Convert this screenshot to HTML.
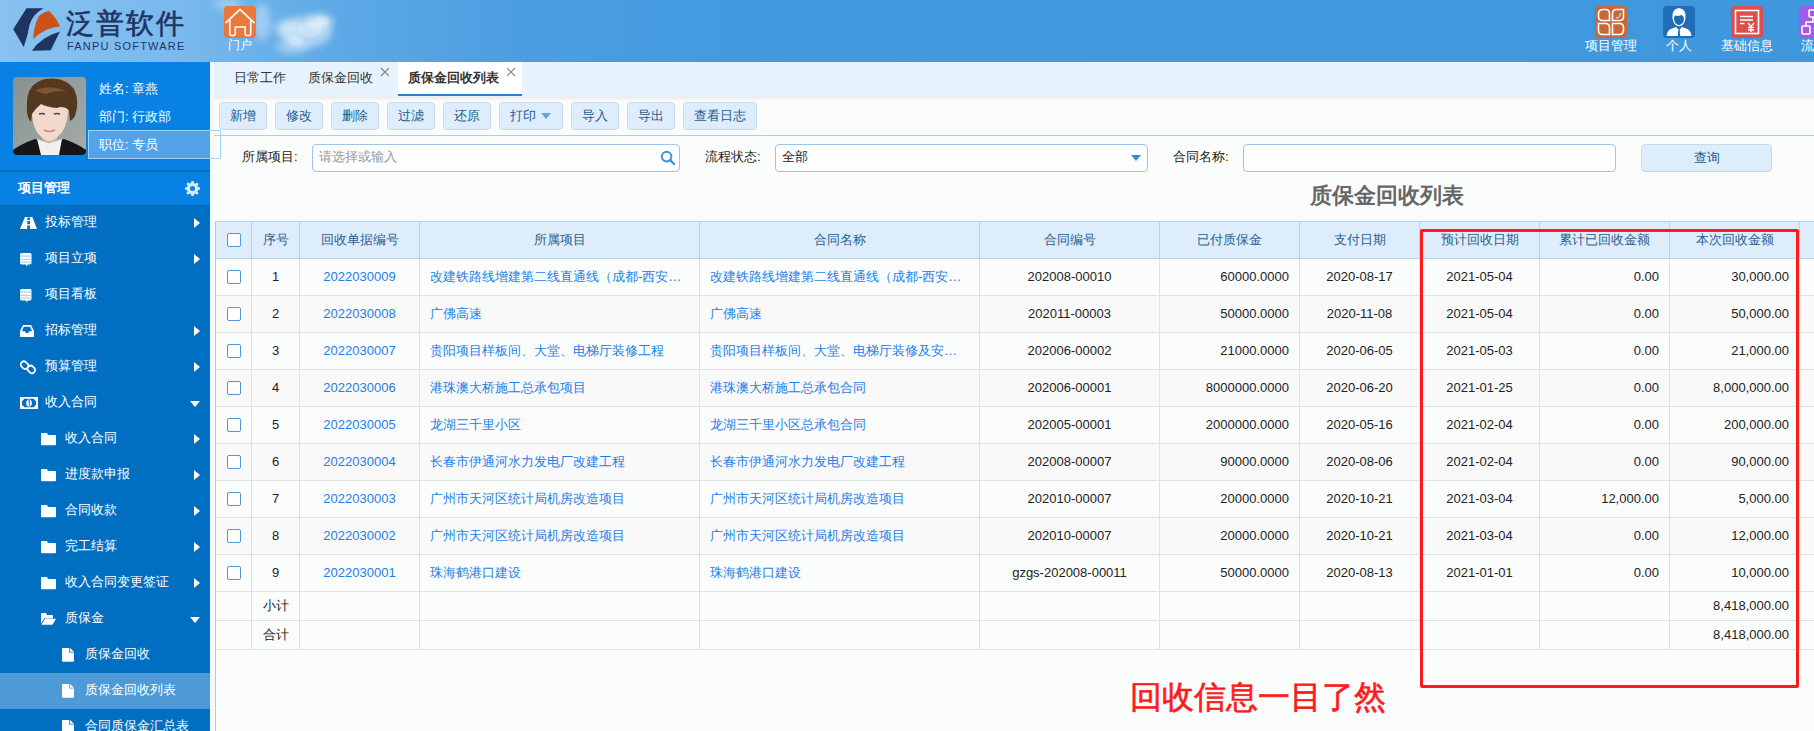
<!DOCTYPE html>
<html><head><meta charset="utf-8">
<style>
*{margin:0;padding:0;box-sizing:border-box}
html,body{width:1814px;height:731px;overflow:hidden;background:#fbfdfd;font-family:"Liberation Sans",sans-serif;font-size:13px;color:#333}
.abs{position:absolute}
#hdr{left:0;top:0;width:1814px;height:62px;background:linear-gradient(to right,#88c2f0 0,#7ab9ed 180px,#5ea9e6 330px,#4b9ee1 520px,#4199df 800px,#3f97de 1814px)}
#side{left:0;top:62px;width:210px;height:669px;background:#006fc2}
#user{left:0;top:62px;width:210px;height:108px;background:#0781e3}
#uline{left:0;top:170px;width:210px;height:2px;background:#0670c0}
#mh{left:0;top:172px;width:210px;height:33px;background:#0781e3;color:#fff;font-weight:bold}
.mi{position:absolute;left:0;width:210px;height:36px;line-height:36px;color:#fff}
.mi .t{position:absolute;top:0}
.mi .ar{position:absolute;left:193px;top:13px;width:0;height:0;border-top:5px solid transparent;border-bottom:5px solid transparent;border-left:6px solid #fff}
.mi .dn{position:absolute;left:191px;top:15px;width:0;height:0;border-left:5px solid transparent;border-right:5px solid transparent;border-top:6px solid #fff}
#tabs{left:214px;top:62px;width:1600px;height:34px;background:#e6f2fc}
#strip{left:210px;top:62px;width:4px;height:669px;background:#f3f8fd}
.tab{position:absolute;top:62px;height:34px;line-height:32px;color:#333}
.x{position:absolute;color:#777;font-size:15px;line-height:15px}
.btn{position:absolute;top:102px;height:28px;line-height:25px;background:#deedfb;border:1px solid #c3dbef;border-radius:4px;text-align:center;color:#1f5c90}
.lbl{position:absolute;top:148px;line-height:18px;color:#222}
.inp{position:absolute;top:144px;height:28px;border:1px solid #9fc5e6;border-radius:4px;background:#fdfeff}
table{position:absolute;left:215px;top:221px;border-collapse:collapse;table-layout:fixed}
td,th{color:#222;border:1px solid #e1e1e1;height:37px;padding:0;font-weight:normal;white-space:nowrap;overflow:hidden;text-overflow:ellipsis}
th{background:#deedfb;border-color:#b7d4ee;color:#2a6090;height:37px;padding-bottom:1px}
.cb{display:inline-block;width:14px;height:14px;border:1px solid #5096d8;border-radius:2px;background:#fff;vertical-align:middle}
.lk{color:#1f7fe6}
.c{text-align:center}.r{text-align:right;padding-right:10px}.l{text-align:left;padding-left:10px;padding-right:14px}
.sum td{height:29px}
tr.odd td{background:#fbfdfd}tr.even td{background:#f9f9fa}
td{padding-bottom:1px}
</style></head><body>
<!-- header -->
<div id="hdr" class="abs"></div>
<svg class="abs" style="left:200px;top:0" width="160" height="62" viewBox="200 0 160 62">
 <defs><filter id="cb" x="-50%" y="-50%" width="200%" height="200%"><feGaussianBlur stdDeviation="3.5"/></filter><filter id="cb2" x="-50%" y="-50%" width="200%" height="200%"><feGaussianBlur stdDeviation="1.8"/></filter></defs>
 <g filter="url(#cb)" fill="#fff">
  <ellipse cx="306" cy="32" rx="26" ry="16" opacity=".45"/>
  <ellipse cx="320" cy="22" rx="14" ry="9" opacity=".45"/>
  <ellipse cx="288" cy="28" rx="14" ry="9" opacity=".4"/>
  <ellipse cx="292" cy="47" rx="16" ry="7" opacity=".35"/>
  <ellipse cx="262" cy="22" rx="9" ry="18" opacity=".35"/>
  <ellipse cx="228" cy="4" rx="14" ry="6" opacity=".3"/>
 </g>
 <g filter="url(#cb2)" fill="#fff">
  <ellipse cx="310" cy="30" rx="12" ry="8" opacity=".3"/>
  <ellipse cx="322" cy="21" rx="7" ry="5" opacity=".3"/>
  <ellipse cx="296" cy="40" rx="8" ry="5" opacity=".25"/>
 </g>
</svg>
<svg class="abs" style="left:0;top:0" width="70" height="62" viewBox="0 0 70 62">
 <path d="M13.2 29.2 L26.5 8.3 L43.5 8.3 Q32 15 29.5 25 Q27.5 37 23.7 46.9 Z" fill="#1f3463"/>
 <path d="M33.1 39.1 Q33.5 27 38.6 16.5 Q43 12 49 11 Q56 17 60 26.5 Q46 27 33.1 39.1 Z" fill="#cd5218"/>
 <path d="M32 50.7 Q40 37.5 60 31.4 L50.7 50.2 Z" fill="#1f3463"/>
</svg>
<div class="abs" style="left:66px;top:7px;font-size:28px;line-height:33px;color:#1f3463;letter-spacing:2px;-webkit-text-stroke:0.6px #1f3463;white-space:nowrap">泛普软件</div>
<div class="abs" style="left:67px;top:39px;font-size:11px;line-height:14px;color:#1f3463;letter-spacing:1.2px;white-space:nowrap">FANPU SOFTWARE</div>
<div class="abs" style="left:224px;top:6px;width:32px;height:32px;border-radius:4px;background:#e8793b"></div>
<svg class="abs" style="left:224px;top:6px" width="32" height="32" viewBox="0 0 32 32">
 <path d="M2 16.6 L16 3.4 L30 16.6" fill="none" stroke="#fff" stroke-width="1.6" stroke-linecap="round" stroke-linejoin="round"/>
 <path d="M5.8 14 V28 Q5.8 29.5 7.3 29.5 H9.8 Q11.3 29.5 11.3 28 V21 H21.2 V28 Q21.2 29.5 22.7 29.5 H25.2 Q26.7 29.5 26.7 28 V14" fill="none" stroke="#fff" stroke-width="1.6" stroke-linejoin="round"/>
</svg>
<div class="abs" style="left:228px;top:38px;font-size:12px;line-height:14px;color:#fff;white-space:nowrap">门户</div>

<!-- top right icons -->
<div class="abs" style="left:1595px;top:6px;width:32px;height:32px;border-radius:4px;background:#c8673a"></div>
<svg class="abs" style="left:1595px;top:6px" width="32" height="32" viewBox="0 0 32 32" fill="none" stroke="#fff" stroke-width="1.6">
 <path d="M3.5 8 Q3.5 3.5 8 3.5 H10.5 Q14.5 3.5 14.5 7.5 V14.5 H7.5 Q3.5 14.5 3.5 10.5 Z"/>
 <path d="M17.5 7.5 Q17.5 3.5 21.5 3.5 H28.5 V10.5 Q28.5 14.5 24.5 14.5 H17.5 Z"/>
 <path d="M3.5 17.5 H10.5 Q14.5 17.5 14.5 21.5 V28.5 H7.5 Q3.5 28.5 3.5 24.5 Z"/>
 <path d="M17.5 17.5 H24.5 Q28.5 17.5 28.5 21.5 V24 Q28.5 28.5 24 28.5 H17.5 Z"/>
 <path d="M21 12 Q25 12 25.5 7" stroke-width="0.9"/>
</svg>
<div class="abs" style="left:1585px;top:38px;width:52px;text-align:center;font-size:13px;line-height:15px;color:#fff;white-space:nowrap">项目管理</div>
<div class="abs" style="left:1663px;top:6px;width:32px;height:32px;border-radius:4px;background:#1f6db5"></div>
<svg class="abs" style="left:1663px;top:6px" width="32" height="32" viewBox="0 0 32 32">
 <path d="M9.5 12 Q8.5 3 16 2 Q23.5 3 22.5 12 Q22 19 16 20.5 Q10 19 9.5 12 Z" fill="#fff"/>
 <path d="M11 12.5 Q11 18 16 19.2 Q21 18 21 12.5 Q20.5 9.5 18.5 9 Q15 10.5 12 9.5 Q11 10.5 11 12.5 Z" fill="#1f6db5"/>
 <path d="M3.5 30 Q4 24 9 22.5 L13 21 L16 24 L19 21 L23 22.5 Q28 24 28.5 30 Z" fill="#fff"/>
 <path d="M15.3 23.5 L16.7 23.5 L17.2 30 L14.8 30 Z" fill="#1f6db5"/>
</svg>
<div class="abs" style="left:1653px;top:38px;width:52px;text-align:center;font-size:13px;line-height:15px;color:#fff;white-space:nowrap">个人</div>
<div class="abs" style="left:1731px;top:6px;width:32px;height:32px;border-radius:4px;background:#d9504e"></div>
<svg class="abs" style="left:1731px;top:6px" width="32" height="32" viewBox="0 0 32 32" fill="none" stroke="#fff">
 <rect x="4.5" y="4.5" width="23" height="23" stroke-width="1.6"/>
 <path d="M9 10.5 H22 M9 14 H22 M9 17.5 H13.5" stroke-width="1.4"/>
 <path d="M17 17 L20 20.5 L23 17 M20 20.5 V26 M17 21.5 H23 M17 24 H23" stroke-width="1.3"/>
</svg>
<div class="abs" style="left:1721px;top:38px;width:52px;text-align:center;font-size:13px;line-height:15px;color:#fff;white-space:nowrap">基础信息</div>
<div class="abs" style="left:1799px;top:6px;width:32px;height:32px;border-radius:4px;background:#a25be8"></div>
<svg class="abs" style="left:1799px;top:6px" width="32" height="32" viewBox="0 0 32 32" fill="none" stroke="#fff" stroke-width="1.6">
 <rect x="10" y="4" width="8" height="7" rx="1"/><rect x="3" y="20" width="8" height="8" rx="1"/>
 <path d="M7 20 V16 H14 V11"/>
</svg>
<div class="abs" style="left:1801px;top:38px;font-size:13px;line-height:15px;color:#fff;white-space:nowrap">流程</div>

<!-- sidebar -->
<div id="side" class="abs"></div>
<div id="user" class="abs"></div>
<svg class="abs" style="left:13px;top:77px" width="73" height="78" viewBox="0 0 73 78">
 <defs><linearGradient id="pbg" x1="0" y1="0" x2="1" y2="1"><stop offset="0" stop-color="#86918d"/><stop offset="1" stop-color="#a4adaa"/></linearGradient>
 <clipPath id="pc"><rect width="73" height="78" rx="4"/></clipPath></defs>
 <g clip-path="url(#pc)">
 <rect width="73" height="78" fill="url(#pbg)"/>
 <path d="M0 73 Q8 67 22 62 L36 66 L51 62 Q65 67 73 73 V78 H0 Z" fill="#161618"/>
 <path d="M24 62 L36 66 L49 62 L46 78 H28 Z" fill="#f2efed"/>
 <path d="M28 50 L29 62 Q36 69 44 62 L45 50 Z" fill="#e6c0aa"/>
 <path d="M19 34 Q19 59 36 64 Q54 59 55 34 Q52 24 37 24 Q23 24 19 34 Z" fill="#f3d9cb"/>
 <path d="M14 28 Q13 7 32 2 Q52 -1 61 12 Q67 24 62 39 Q60 43 57 44 L56 33 Q50 28 44 31 Q34 30 28 27 Q23 31 19 37 L18 45 Q13 40 14 28 Z" fill="#543820"/>
 <path d="M22 14 Q36 6 55 15 Q46 12 33 17 Z" fill="#7a5632"/>
 <path d="M26 37 Q29 36 32 37 M41 37 Q44 36 47 37" stroke="#3e454c" stroke-width="1.5" fill="none"/>
 <path d="M31 53 Q36 56 42 53" stroke="#c88888" stroke-width="1.6" fill="none"/>
 </g>
</svg>
<div class="abs" style="left:99px;top:80px;line-height:17px;color:#fff">姓名: 章燕</div>
<div class="abs" style="left:99px;top:108px;line-height:17px;color:#fff">部门: 行政部</div>
<div class="abs" style="left:88px;top:130px;width:122px;height:29px;background:#52a3ea"></div>
<div class="abs" style="left:99px;top:136px;line-height:17px;color:#fff">职位: 专员</div>
<div id="uline" class="abs"></div>
<div id="mh" class="abs"><span class="abs" style="left:18px;top:7px;line-height:17px">项目管理</span></div>
<svg class="abs" style="left:185px;top:181px" width="15" height="15" viewBox="0 0 16 16"><path fill="#d8e9f8" d="M6.8 0h2.4l.4 2.2 1.5.6 1.8-1.3 1.7 1.7-1.3 1.8.6 1.5 2.2.4v2.4l-2.2.4-.6 1.5 1.3 1.8-1.7 1.7-1.8-1.3-1.5.6-.4 2.2H6.8l-.4-2.2-1.5-.6-1.8 1.3-1.7-1.7 1.3-1.8-.6-1.5L0 9.2V6.8l2.2-.4.6-1.5-1.3-1.8 1.7-1.7 1.8 1.3 1.5-.6zM8 5.3A2.7 2.7 0 1 0 8 10.7 2.7 2.7 0 1 0 8 5.3z"/></svg>
<svg class="abs" style="left:20px;top:217px" width="17" height="12" viewBox="0 0 17 12"><path d="M5 0 H12.4 L17 12 H0 Z" fill="#fff"/><path d="M7.4 0.6 H10 V3 H7.4 Z M7.3 3.9 H10 V7.3 H7.3 Z M7.2 8.6 H10 V12 H7.2 Z" fill="#006fc2"/></svg>
<div class="abs" style="left:45px;top:213px;line-height:18px;color:#fff;white-space:nowrap">投标管理</div>
<div class="abs" style="left:194px;top:218px;width:0;height:0;border-top:5px solid transparent;border-bottom:5px solid transparent;border-left:6px solid #fff"></div>
<svg class="abs" style="left:20px;top:253px" width="12" height="14" viewBox="0 0 12 14"><path d="M1.5 0 H10 Q11.5 0 11.5 1.5 V10 Q11.5 11.4 10 11.4 H7.8 L6.4 13.6 L6 11.4 H1.5 Q0 11.4 0 10 V1.5 Q0 0 1.5 0 Z" fill="#fff"/><path d="M0 3.1 H11.5 M0 6.3 H11.5 M0 9.1 H11.5" stroke="#8ab9e4" stroke-width="0.8"/></svg>
<div class="abs" style="left:45px;top:249px;line-height:18px;color:#fff;white-space:nowrap">项目立项</div>
<div class="abs" style="left:194px;top:254px;width:0;height:0;border-top:5px solid transparent;border-bottom:5px solid transparent;border-left:6px solid #fff"></div>
<svg class="abs" style="left:20px;top:289px" width="12" height="14" viewBox="0 0 12 14"><path d="M1.5 0 H10 Q11.5 0 11.5 1.5 V10 Q11.5 11.4 10 11.4 H7.8 L6.4 13.6 L6 11.4 H1.5 Q0 11.4 0 10 V1.5 Q0 0 1.5 0 Z" fill="#fff"/><path d="M0 3.1 H11.5 M0 6.3 H11.5 M0 9.1 H11.5" stroke="#8ab9e4" stroke-width="0.8"/></svg>
<div class="abs" style="left:45px;top:285px;line-height:18px;color:#fff;white-space:nowrap">项目看板</div>
<svg class="abs" style="left:20px;top:325px" width="14" height="12" viewBox="0 0 14 12"><path d="M3 0 H11 L14 6 V12 H0 V6 Z" fill="#fff"/><path d="M3.8 1.8 H10.2 L12 6.2 H9.2 Q8.5 8.2 7 8.2 Q5.5 8.2 4.8 6.2 H2 Z" fill="#006fc2"/></svg>
<div class="abs" style="left:45px;top:321px;line-height:18px;color:#fff;white-space:nowrap">招标管理</div>
<div class="abs" style="left:194px;top:326px;width:0;height:0;border-top:5px solid transparent;border-bottom:5px solid transparent;border-left:6px solid #fff"></div>
<svg class="abs" style="left:20px;top:359px" width="16" height="16" viewBox="0 0 16 16" fill="none" stroke="#fff" stroke-width="1.8"><rect x="1.4" y="2.2" width="6.2" height="8" rx="3" transform="rotate(-45 4.5 6.2)"/><rect x="8.2" y="6.4" width="6.2" height="8" rx="3" transform="rotate(-45 11.3 10.4)"/></svg>
<div class="abs" style="left:45px;top:357px;line-height:18px;color:#fff;white-space:nowrap">预算管理</div>
<div class="abs" style="left:194px;top:362px;width:0;height:0;border-top:5px solid transparent;border-bottom:5px solid transparent;border-left:6px solid #fff"></div>
<svg class="abs" style="left:20px;top:397px" width="18" height="12" viewBox="0 0 18 12"><rect x="0" y="0" width="18" height="12" fill="#fff"/><path d="M4 1.8 H14 Q14.5 3.5 16 4 V8 Q14.5 8.5 14 10.2 H4 Q3.5 8.5 2 8 V4 Q3.5 3.5 4 1.8 Z" fill="#006fc2"/><ellipse cx="9" cy="6" rx="2.8" ry="3.6" fill="#fff"/><path d="M8.3 4 L9.3 3.4 V8.6" stroke="#006fc2" stroke-width="1" fill="none"/></svg>
<div class="abs" style="left:45px;top:393px;line-height:18px;color:#fff;white-space:nowrap">收入合同</div>
<div class="abs" style="left:190px;top:401px;width:0;height:0;border-left:5px solid transparent;border-right:5px solid transparent;border-top:6px solid #fff"></div>
<svg class="abs" style="left:41px;top:433px" width="15" height="13" viewBox="0 0 15 13"><path d="M1 0 H6 L7 2 H14 Q15 2 15 3 V11.5 Q15 12.3 14 12.3 H1 Q0 12.3 0 11.5 V1 Q0 0 1 0 Z" fill="#fff"/></svg>
<div class="abs" style="left:65px;top:429px;line-height:18px;color:#fff;white-space:nowrap">收入合同</div>
<div class="abs" style="left:194px;top:434px;width:0;height:0;border-top:5px solid transparent;border-bottom:5px solid transparent;border-left:6px solid #fff"></div>
<svg class="abs" style="left:41px;top:469px" width="15" height="13" viewBox="0 0 15 13"><path d="M1 0 H6 L7 2 H14 Q15 2 15 3 V11.5 Q15 12.3 14 12.3 H1 Q0 12.3 0 11.5 V1 Q0 0 1 0 Z" fill="#fff"/></svg>
<div class="abs" style="left:65px;top:465px;line-height:18px;color:#fff;white-space:nowrap">进度款申报</div>
<div class="abs" style="left:194px;top:470px;width:0;height:0;border-top:5px solid transparent;border-bottom:5px solid transparent;border-left:6px solid #fff"></div>
<svg class="abs" style="left:41px;top:505px" width="15" height="13" viewBox="0 0 15 13"><path d="M1 0 H6 L7 2 H14 Q15 2 15 3 V11.5 Q15 12.3 14 12.3 H1 Q0 12.3 0 11.5 V1 Q0 0 1 0 Z" fill="#fff"/></svg>
<div class="abs" style="left:65px;top:501px;line-height:18px;color:#fff;white-space:nowrap">合同收款</div>
<div class="abs" style="left:194px;top:506px;width:0;height:0;border-top:5px solid transparent;border-bottom:5px solid transparent;border-left:6px solid #fff"></div>
<svg class="abs" style="left:41px;top:541px" width="15" height="13" viewBox="0 0 15 13"><path d="M1 0 H6 L7 2 H14 Q15 2 15 3 V11.5 Q15 12.3 14 12.3 H1 Q0 12.3 0 11.5 V1 Q0 0 1 0 Z" fill="#fff"/></svg>
<div class="abs" style="left:65px;top:537px;line-height:18px;color:#fff;white-space:nowrap">完工结算</div>
<div class="abs" style="left:194px;top:542px;width:0;height:0;border-top:5px solid transparent;border-bottom:5px solid transparent;border-left:6px solid #fff"></div>
<svg class="abs" style="left:41px;top:577px" width="15" height="13" viewBox="0 0 15 13"><path d="M1 0 H6 L7 2 H14 Q15 2 15 3 V11.5 Q15 12.3 14 12.3 H1 Q0 12.3 0 11.5 V1 Q0 0 1 0 Z" fill="#fff"/></svg>
<div class="abs" style="left:65px;top:573px;line-height:18px;color:#fff;white-space:nowrap">收入合同变更签证</div>
<div class="abs" style="left:194px;top:578px;width:0;height:0;border-top:5px solid transparent;border-bottom:5px solid transparent;border-left:6px solid #fff"></div>
<svg class="abs" style="left:41px;top:613px" width="15" height="12" viewBox="0 0 15 12"><path d="M1 0 H5 L6 2 H11 Q12 2 12 3 V5 H3.5 L0 10.5 V1 Q0 0 1 0 Z" fill="#fff"/><path d="M4 5.8 H15 L11.5 11.7 H0.3 Z" fill="#fff"/><path d="M3.6 5.4 H12" stroke="#c9dcee" stroke-width="0.8"/></svg>
<div class="abs" style="left:65px;top:609px;line-height:18px;color:#fff;white-space:nowrap">质保金</div>
<div class="abs" style="left:190px;top:617px;width:0;height:0;border-left:5px solid transparent;border-right:5px solid transparent;border-top:6px solid #fff"></div>
<svg class="abs" style="left:62px;top:648px" width="12" height="14" viewBox="0 0 12 14"><path d="M1 0 H7.2 V4.4 H12 V13 Q12 13.7 11 13.7 H1 Q0 13.7 0 13 V1 Q0 0 1 0 Z M8 0 L12 3.8 H8 Z" fill="#fff"/></svg>
<div class="abs" style="left:85px;top:645px;line-height:18px;color:#fff;white-space:nowrap">质保金回收</div>
<div class="abs" style="left:0;top:673px;width:210px;height:36px;background:#4e9ad6"></div>
<svg class="abs" style="left:62px;top:684px" width="12" height="14" viewBox="0 0 12 14"><path d="M1 0 H7.2 V4.4 H12 V13 Q12 13.7 11 13.7 H1 Q0 13.7 0 13 V1 Q0 0 1 0 Z M8 0 L12 3.8 H8 Z" fill="#fff"/></svg>
<div class="abs" style="left:85px;top:681px;line-height:18px;color:#fff;white-space:nowrap">质保金回收列表</div>
<svg class="abs" style="left:62px;top:720px" width="12" height="14" viewBox="0 0 12 14"><path d="M1 0 H7.2 V4.4 H12 V13 Q12 13.7 11 13.7 H1 Q0 13.7 0 13 V1 Q0 0 1 0 Z M8 0 L12 3.8 H8 Z" fill="#fff"/></svg>
<div class="abs" style="left:85px;top:717px;line-height:18px;color:#fff;white-space:nowrap">合同质保金汇总表</div>
<div id="strip" class="abs"></div>
<div class="abs" style="left:88px;top:130px;width:133px;height:29px;border:1px solid #a3d2f5"></div>

<!-- tabs -->
<div id="tabs" class="abs"></div>
<div class="abs" style="left:214px;top:96px;width:1600px;height:6px;background:linear-gradient(#e9ecef,#fbfdff)"></div>
<div class="tab" style="left:234px">日常工作</div>
<div class="tab" style="left:308px">质保金回收</div>
<svg class="abs" style="left:380px;top:67px" width="10" height="10" viewBox="0 0 10 10"><path d="M1 1 L9 9 M9 1 L1 9" stroke="#888" stroke-width="1.1"/></svg>
<div class="abs" style="left:398px;top:62px;width:124px;height:34px;background:#fff;border-bottom:2px solid #2a7fd4"></div>
<div class="tab" style="left:408px;font-weight:bold">质保金回收列表</div>
<svg class="abs" style="left:506px;top:67px" width="10" height="10" viewBox="0 0 10 10"><path d="M1 1 L9 9 M9 1 L1 9" stroke="#888" stroke-width="1.1"/></svg>

<!-- toolbar -->
<div class="btn" style="left:219px;width:48px">新增</div>
<div class="btn" style="left:275px;width:48px">修改</div>
<div class="btn" style="left:331px;width:48px">删除</div>
<div class="btn" style="left:387px;width:48px">过滤</div>
<div class="btn" style="left:443px;width:48px">还原</div>
<div class="btn" style="left:499px;width:64px;text-align:left;padding-left:10px">打印<span class="abs" style="left:41px;top:10px;width:0;height:0;border-left:5px solid transparent;border-right:5px solid transparent;border-top:6px solid #66a5dc"></span></div>
<div class="btn" style="left:571px;width:48px">导入</div>
<div class="btn" style="left:627px;width:48px">导出</div>
<div class="btn" style="left:683px;width:74px">查看日志</div>
<div class="abs" style="left:214px;top:135px;width:1600px;height:1px;background:#a9cdea"></div>

<!-- search -->
<div class="lbl" style="left:242px">所属项目:</div>
<div class="inp" style="left:312px;width:368px"></div>
<div class="abs" style="left:319px;top:148px;line-height:18px;color:#999">请选择或输入</div>
<svg class="abs" style="left:660px;top:150px" width="16" height="16" viewBox="0 0 16 16"><circle cx="6.6" cy="6.6" r="4.8" fill="none" stroke="#3b94de" stroke-width="2"/><path d="M10.2 10.2 L14 14" stroke="#3b94de" stroke-width="2.4" stroke-linecap="round"/></svg>
<div class="lbl" style="left:705px">流程状态:</div>
<div class="inp" style="left:775px;width:373px"></div>
<div class="abs" style="left:782px;top:148px;line-height:18px;color:#222">全部</div>
<div class="abs" style="left:1131px;top:155px;width:0;height:0;border-left:5px solid transparent;border-right:5px solid transparent;border-top:6px solid #3a8ad6"></div>
<div class="lbl" style="left:1173px">合同名称:</div>
<div class="inp" style="left:1243px;width:373px"></div>
<div class="btn" style="left:1641px;top:144px;width:131px;height:28px">查询</div>

<div class="abs" style="left:1310px;top:183px;font-size:22px;line-height:26px;font-weight:bold;color:#666;white-space:nowrap">质保金回收列表</div>

<table style="width:1704px"><colgroup><col style="width:36px"><col style="width:48px"><col style="width:120px"><col style="width:280px"><col style="width:280px"><col style="width:180px"><col style="width:140px"><col style="width:120px"><col style="width:120px"><col style="width:130px"><col style="width:130px"><col style="width:120px"></colgroup>
<tr class="hd"><th><span class="cb"></span></th><th>序号</th><th>回收单据编号</th><th>所属项目</th><th>合同名称</th><th>合同编号</th><th>已付质保金</th><th>支付日期</th><th>预计回收日期</th><th>累计已回收金额</th><th>本次回收金额</th><th></th></tr>
<tr class="odd"><td class="c"><span class="cb"></span></td><td class="c">1</td><td class="c lk">2022030009</td><td class="l lk">改建铁路线增建第二线直通线（成都-西安铁路）</td><td class="l lk">改建铁路线增建第二线直通线（成都-西安铁路）</td><td class="c">202008-00010</td><td class="r">60000.0000</td><td class="c">2020-08-17</td><td class="c">2021-05-04</td><td class="r">0.00</td><td class="r">30,000.00</td><td></td></tr>
<tr class="even"><td class="c"><span class="cb"></span></td><td class="c">2</td><td class="c lk">2022030008</td><td class="l lk">广佛高速</td><td class="l lk">广佛高速</td><td class="c">202011-00003</td><td class="r">50000.0000</td><td class="c">2020-11-08</td><td class="c">2021-05-04</td><td class="r">0.00</td><td class="r">50,000.00</td><td></td></tr>
<tr class="odd"><td class="c"><span class="cb"></span></td><td class="c">3</td><td class="c lk">2022030007</td><td class="l lk">贵阳项目样板间、大堂、电梯厅装修工程</td><td class="l lk">贵阳项目样板间、大堂、电梯厅装修及安装工程</td><td class="c">202006-00002</td><td class="r">21000.0000</td><td class="c">2020-06-05</td><td class="c">2021-05-03</td><td class="r">0.00</td><td class="r">21,000.00</td><td></td></tr>
<tr class="even"><td class="c"><span class="cb"></span></td><td class="c">4</td><td class="c lk">2022030006</td><td class="l lk">港珠澳大桥施工总承包项目</td><td class="l lk">港珠澳大桥施工总承包合同</td><td class="c">202006-00001</td><td class="r">8000000.0000</td><td class="c">2020-06-20</td><td class="c">2021-01-25</td><td class="r">0.00</td><td class="r">8,000,000.00</td><td></td></tr>
<tr class="odd"><td class="c"><span class="cb"></span></td><td class="c">5</td><td class="c lk">2022030005</td><td class="l lk">龙湖三千里小区</td><td class="l lk">龙湖三千里小区总承包合同</td><td class="c">202005-00001</td><td class="r">2000000.0000</td><td class="c">2020-05-16</td><td class="c">2021-02-04</td><td class="r">0.00</td><td class="r">200,000.00</td><td></td></tr>
<tr class="even"><td class="c"><span class="cb"></span></td><td class="c">6</td><td class="c lk">2022030004</td><td class="l lk">长春市伊通河水力发电厂改建工程</td><td class="l lk">长春市伊通河水力发电厂改建工程</td><td class="c">202008-00007</td><td class="r">90000.0000</td><td class="c">2020-08-06</td><td class="c">2021-02-04</td><td class="r">0.00</td><td class="r">90,000.00</td><td></td></tr>
<tr class="odd"><td class="c"><span class="cb"></span></td><td class="c">7</td><td class="c lk">2022030003</td><td class="l lk">广州市天河区统计局机房改造项目</td><td class="l lk">广州市天河区统计局机房改造项目</td><td class="c">202010-00007</td><td class="r">20000.0000</td><td class="c">2020-10-21</td><td class="c">2021-03-04</td><td class="r">12,000.00</td><td class="r">5,000.00</td><td></td></tr>
<tr class="even"><td class="c"><span class="cb"></span></td><td class="c">8</td><td class="c lk">2022030002</td><td class="l lk">广州市天河区统计局机房改造项目</td><td class="l lk">广州市天河区统计局机房改造项目</td><td class="c">202010-00007</td><td class="r">20000.0000</td><td class="c">2020-10-21</td><td class="c">2021-03-04</td><td class="r">0.00</td><td class="r">12,000.00</td><td></td></tr>
<tr class="odd"><td class="c"><span class="cb"></span></td><td class="c">9</td><td class="c lk">2022030001</td><td class="l lk">珠海鹤港口建设</td><td class="l lk">珠海鹤港口建设</td><td class="c">gzgs-202008-00011</td><td class="r">50000.0000</td><td class="c">2020-08-13</td><td class="c">2021-01-01</td><td class="r">0.00</td><td class="r">10,000.00</td><td></td></tr>
<tr class="sum" style="height:29px"><td></td><td class="c">小计</td><td></td><td></td><td></td><td></td><td></td><td></td><td></td><td></td><td class="r">8,418,000.00</td><td></td></tr>
<tr class="sum" style="height:29px"><td></td><td class="c">合计</td><td></td><td></td><td></td><td></td><td></td><td></td><td></td><td></td><td class="r">8,418,000.00</td><td></td></tr>
</table>
<div class="abs" style="left:215px;top:222px;width:1px;height:509px;background:#a6cbea"></div>

<div class="abs" style="left:1420px;top:229px;width:379px;height:459px;border:3px solid #ff1b1b;border-radius:2px"></div>
<div class="abs" style="left:1130px;top:677px;font-size:32px;line-height:40px;color:#ff1b1b;-webkit-text-stroke:0.6px #ff1b1b;white-space:nowrap">回收信息一目了然</div>
</body></html>
